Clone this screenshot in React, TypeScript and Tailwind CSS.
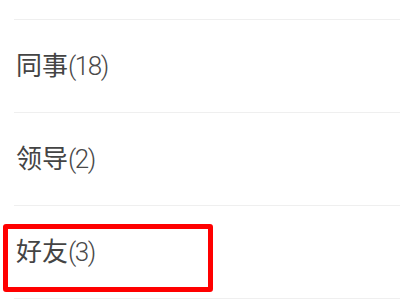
export default function App() {
  const groups = [
    { name: '同事', count: 18, highlight: false },
    { name: '领导', count: 2, highlight: false },
    { name: '好友', count: 3, highlight: true },
  ];

  return (
    <div
      className="w-[400px] h-[300px] overflow-hidden bg-white"
      style={{ fontFamily: 'Roboto, "Noto Sans CJK SC", sans-serif' }}
    >
      <div className="h-[19px]" />
      <div className="ml-[14px] h-px bg-[#efefef]" />
      {groups.map((g) => (
        <div key={g.name}>
          <div className="relative h-[92px] flex items-center pl-4">
            {g.highlight && (
              <div className="absolute left-[3px] top-[18px] w-[210px] h-[68px] border-[5px] border-[#ff0000] rounded-[3px]" />
            )}
            <span className="text-[26px] leading-none text-[#444]">
              {g.name}
              <span className="font-light tracking-[-1.5px] text-[#4a4a4a]">({g.count})</span>
            </span>
          </div>
          <div className="ml-[14px] h-px bg-[#efefef]" />
        </div>
      ))}
    </div>
  );
}
